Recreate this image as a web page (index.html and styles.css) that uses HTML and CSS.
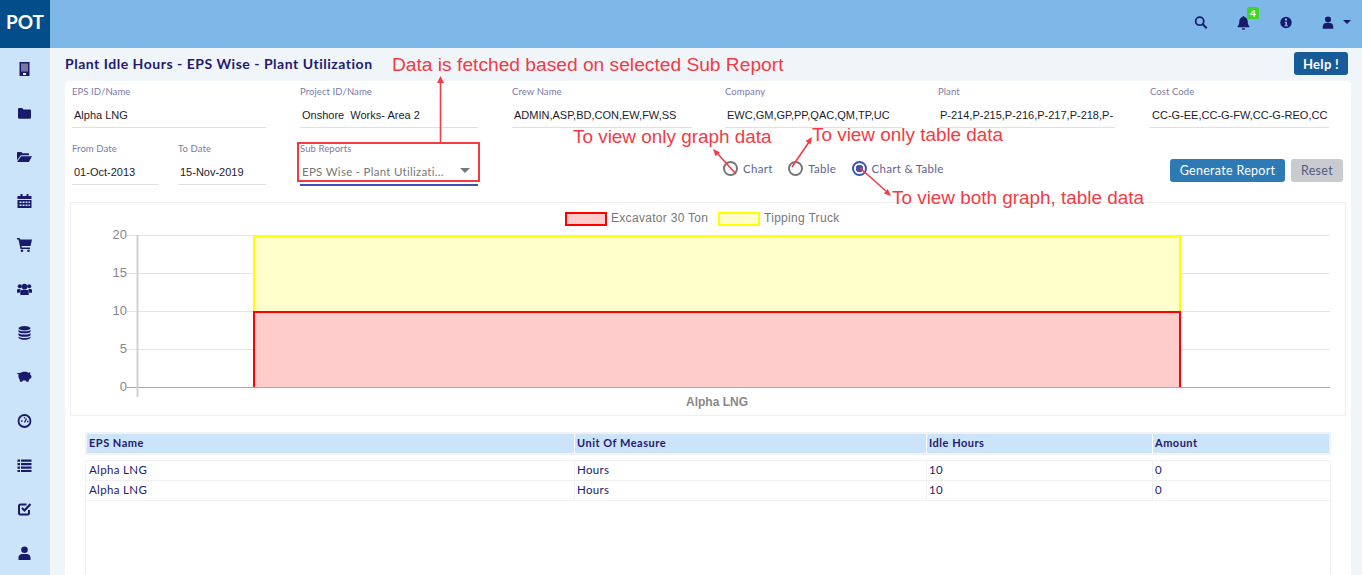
FILE: index.html
```html
<!DOCTYPE html>
<html>

<head>
    <meta charset="utf-8" />
    <title>Plant Idle Hours</title>
    <link rel="stylesheet" href="styles.css">
</head>

<body>
    <header class="topbar">
        <div class="logo">POT</div>
        <div class="top-icons">
            <svg class="top-ic" viewBox="0 0 16 16"><circle cx="6.500" cy="6.500" r="4.600" fill="none" stroke="#1a1a6c" stroke-width="2"/><path d="M10 10l4.500 4.500" stroke="#1a1a6c" stroke-width="2.400"/></svg>
            <span class="bell">
                <svg class="top-ic" viewBox="0 0 16 16"><path d="M8 1c.6 0 1 .4 1 1 2.400.5 3.500 2.500 3.500 5 0 3 .8 4 1.800 5v1H1.700v-1c1-1 1.800-2 1.800-5 0-2.500 1.100-4.500 3.500-5 0-.6.400-1 1-1zM6.300 14h3.400c0 1-.8 1.700-1.700 1.700S6.300 15 6.300 14z" fill="#1a1a6c"/></svg>
                <span class="badge">4</span>
            </span>
            <svg class="top-ic" viewBox="0 0 16 16"><circle cx="8" cy="8" r="6.500" fill="#1a1a6c"/><rect x="6.800" y="3.500" width="2.400" height="2.200" fill="#7db8e8"/><path d="M6.300 7h2.900v4h1v1.300H6.300V11h1V8.300h-1z" fill="#7db8e8"/></svg>
            <span class="user-menu">
                <svg class="top-ic" viewBox="0 0 16 16"><circle cx="8" cy="4.500" r="3.500" fill="#1a1a6c"/><path d="M2 15v-2.500C2 10 4 8.500 5.500 8.500h5c1.500 0 3.500 1.500 3.500 4V15z" fill="#1a1a6c"/></svg>
                <i class="caret"></i>
            </span>
        </div>
    </header>

    <div class="wrap">
        <nav class="sidebar">
            <svg viewBox="0 0 15 14"><path d="M2.500 0h10v14h-10z" fill="#1a1a6c"/><path d="M4 1.500h7v8H4z" fill="#77779f"/><path d="M6 11h3v2H6z" fill="#e8f2fb"/></svg>
            <svg viewBox="0 0 15 14"><path d="M1 3.200C1 2.500 1.500 2 2.200 2h3l1.300 1.500h6.300c.7 0 1.200.5 1.200 1.200v6.800c0 .7-.5 1.200-1.200 1.200H2.200c-.7 0-1.200-.5-1.200-1.200z" fill="#1a1a6c"/></svg>
            <svg viewBox="0 0 18 14"><path d="M0 2.500C0 1.700.6 1 1.400 1h3.800l1.400 1.500h6.500c.8 0 1.400.6 1.400 1.400V5H4.500L0 11zM4.900 6H18l-3.700 7H0z" fill="#1a1a6c"/></svg>
            <svg viewBox="0 0 14 14"><path d="M0 2h3V0h2v2h4V0h2v2h3v3H0z" fill="#1a1a6c"/><path d="M0 6h14v8H0z" fill="#1a1a6c"/><path d="M2 7.500h2v1.500H2zM5 7.500h2v1.500H5zM8 7.500h2v1.500H8zM11 7.500h1.500v1.500H11zM2 10.500h2V12H2zM5 10.500h2V12H5zM8 10.500h2V12H8zM11 10.500h1.500V12H11z" fill="#cbe4f9"/></svg>
            <svg viewBox="0 0 15 14"><path d="M0 0h2.600l.5 1.500H15l-1.500 6.500H4.500l.4 1.500H13V11H3.500L1.500 1.500H0z" fill="#1a1a6c"/><circle cx="5" cy="12.700" r="1.300" fill="#1a1a6c"/><circle cx="11.500" cy="12.700" r="1.300" fill="#1a1a6c"/></svg>
            <svg viewBox="0 0 16 14"><circle cx="3" cy="4" r="2.200" fill="#1a1a6c"/><circle cx="13" cy="4" r="2.200" fill="#1a1a6c"/><circle cx="8" cy="4.500" r="3" fill="#1a1a6c"/><path d="M0 11V8.500C0 7.500.8 7 1.500 7h2.300L3 11zM16 11V8.500c0-1-.8-1.500-1.500-1.500h-2.300l.8 4zM3.500 13.500v-4C3.500 8.500 4.500 8 5 8h6c.5 0 1.500.5 1.500 1.500v4z" fill="#1a1a6c"/></svg>
            <svg viewBox="0 0 13 14"><ellipse cx="6.500" cy="2.200" rx="6" ry="2.200" fill="#1a1a6c"/><path d="M.5 3.700c1.500 2 10.500 2 12 0v2c-1.500 2.200-10.500 2.200-12 0zM.5 7c1.500 2 10.500 2 12 0v2.200c-1.500 2.200-10.500 2.200-12 0zM.5 10.500c1.500 2 10.500 2 12 0v1.300c-1.500 2.700-10.500 2.700-12 0z" fill="#1a1a6c"/></svg>
            <svg viewBox="0 0 17 14"><path d="M3.500 2.500C5 1.500 7 1 9 1c2 0 3 .5 4 1.300L15 1.500v3l1.500 1.500-.5 2.500-2 .7-1 3.300h-2.500L10 11H6.500L6 12.500H3.500L2.800 9.500C1.500 8 1.200 5.500 2 4L0 3.500l.5-1z" fill="#1a1a6c"/></svg>
            <svg viewBox="0 0 14 14"><circle cx="7" cy="7" r="6" fill="none" stroke="#1a1a6c" stroke-width="1.800"/><path d="M7 8.500L9 4.500M3.500 7h1.500M9.500 7.500H11M7 3v1.500" stroke="#1a1a6c" stroke-width="1.300"/></svg>
            <svg viewBox="0 0 14 14"><path d="M0 1.500h2.500v2.300H0zM3.500 1.500H14v2.300H3.500zM0 5h2.500v2.300H0zM3.500 5H14v2.300H3.500zM0 8.500h2.500v2.300H0zM3.500 8.500H14v2.300H3.500zM0 12h2.500v2H0zM3.500 12H14v2H3.500z" fill="#1a1a6c"/></svg>
            <svg viewBox="0 0 14 14"><path d="M11.500 8v3c0 .8-.7 1.500-1.500 1.500H3c-.8 0-1.500-.7-1.500-1.500V4c0-.8.7-1.500 1.500-1.500h6" fill="none" stroke="#1a1a6c" stroke-width="2"/><path d="M4.500 6L7 8.500 13 2" fill="none" stroke="#1a1a6c" stroke-width="2.200"/></svg>
            <svg viewBox="0 0 14 14"><circle cx="7" cy="3.800" r="3.300" fill="#1a1a6c"/><path d="M1 14v-2.500C1 9.300 3 8 4.500 8h5c1.500 0 3.500 1.300 3.500 3.500V14z" fill="#1a1a6c"/></svg>
        </nav>

        <main class="content">
            <div class="title-row">
                <h1>Plant Idle Hours - EPS Wise - Plant Utilization</h1>
                <button class="btn-help">Help !</button>
            </div>

            <section class="card">
                <div class="filter-row">
                    <div class="field f1"><label>EPS ID/Name</label><div class="val">Alpha LNG</div></div>
                    <div class="field f2"><label>Project ID/Name</label><div class="val">Onshore&nbsp; Works- Area 2</div></div>
                    <div class="field f3"><label>Crew Name</label><div class="val">ADMIN,ASP,BD,CON,EW,FW,SS</div></div>
                    <div class="field f4"><label>Company</label><div class="val">EWC,GM,GP,PP,QAC,QM,TP,UC</div></div>
                    <div class="field f5"><label>Plant</label><div class="val">P-214,P-215,P-216,P-217,P-218,P-</div></div>
                    <div class="field f6"><label>Cost Code</label><div class="val">CC-G-EE,CC-G-FW,CC-G-REO,CC</div></div>
                </div>

                <div class="filter-row row2">
                    <div class="field d1"><label>From Date</label><div class="val">01-Oct-2013</div></div>
                    <div class="field d2"><label>To Date</label><div class="val">15-Nov-2019</div></div>
                    <div class="field sub"><label>Sub Reports</label>
                        <div class="select"><span>EPS Wise - Plant Utilizati...</span><i class="sel-caret"></i></div>
                    </div>
                    <div class="radios">
                        <span class="radio"><i class="dot"></i>Chart</span>
                        <span class="radio"><i class="dot"></i>Table</span>
                        <span class="radio"><i class="dot on"></i>Chart &amp; Table</span>
                    </div>
                    <div class="actions">
                        <button class="btn-gen">Generate Report</button>
                        <button class="btn-reset">Reset</button>
                    </div>
                </div>

                <div class="chart-box">
                    <svg class="chart" width="1274" height="212" viewBox="0 0 1274 212">
                        <rect x="495" y="10" width="40" height="12" fill="#ffcccc" stroke="#f00" stroke-width="2"/>
                        <text x="540" y="19" class="leg">Excavator 30 Ton</text>
                        <rect x="648" y="10" width="40" height="12" fill="#ffffcc" stroke="#ff0" stroke-width="2"/>
                        <text x="693" y="19" class="leg">Tipping Truck</text>
                        <path d="M56 32.500H1259M56 70.500H1259M56 108.500H1259M56 146.500H1259" stroke="#e4e4e4"/>
                        <rect x="183" y="33" width="926" height="76" fill="#ffffcc"/>
                        <path d="M183 109V33H1109V109" fill="none" stroke="#ff0" stroke-width="2"/>
                        <rect x="183" y="109" width="926" height="76" fill="#ffcccc"/>
                        <path d="M183 185V109H1109V185" fill="none" stroke="#f00" stroke-width="2"/>
                        <path d="M56 184.500H1259" stroke="#a8a8a8"/>
                        <path d="M66.500 32V194" stroke="#d0d0d0" stroke-width="2"/>
                        <text x="56" y="36" class="tick">20</text>
                        <text x="56" y="74" class="tick">15</text>
                        <text x="56" y="112" class="tick">10</text>
                        <text x="56" y="150" class="tick">5</text>
                        <text x="56" y="188" class="tick">0</text>
                        <text x="646" y="203" class="xlab">Alpha LNG</text>
                    </svg>
                </div>

                <div class="grid">
                    <div class="grid-head">
                        <span class="c1">EPS Name</span><span class="c2">Unit Of Measure</span><span class="c3">Idle Hours</span><span class="c4">Amount</span>
                    </div>
                    <div class="grid-body">
                        <div class="grid-row"><span class="c1">Alpha LNG</span><span class="c2">Hours</span><span class="c3">10</span><span class="c4">0</span></div>
                        <div class="grid-row"><span class="c1">Alpha LNG</span><span class="c2">Hours</span><span class="c3">10</span><span class="c4">0</span></div>
                    </div>
                </div>
            </section>
        </main>
    </div>

    <!-- annotations drawn over the page -->
    <svg class="arrows" width="1362" height="575" viewBox="0 0 1362 575">
        <rect x="298" y="143" width="181" height="38" fill="none" stroke="#f33b45" stroke-width="2"/>
        <g stroke="#f33b45" stroke-width="1.600" fill="none">
            <path d="M440.500 142V82"/>
            <path d="M736 174L717 153"/>
            <path d="M792 167L809 142"/>
            <path d="M860 168L886 191"/>
        </g>
        <g fill="#f33b45">
            <path d="M440.500 76l-3.500 7h7z"/>
            <path d="M713 149l6.900 3.200-4.400 4z"/>
            <path d="M812 137l-1.400 7.500-5-3.400z"/>
            <path d="M891 196l-7.200-2.500 4-4.400z"/>
        </g>
    </svg>
    <span class="note n1">Data is fetched based on selected Sub Report</span>
    <span class="note n2">To view only graph data</span>
    <span class="note n3">To view only table data</span>
    <span class="note n4">To view both graph, table data</span>
</body>

</html>
```

FILE: styles.css
```css
* {
    box-sizing: border-box;
}

html,
body {
    margin: 0;
    height: 575px;
    overflow: hidden;
}

body {
    position: relative;
    font-family: "Lato", sans-serif;
    background: #eff5f9;
    color: #1a1a6c;
}

/* top bar */
.topbar {
    display: flex;
    justify-content: space-between;
    height: 48px;
    background: #7db8e8;
}

.logo {
    width: 50px;
    background: #034e8a;
    color: #fff;
    font-size: 19px;
    font-weight: 700;
    line-height: 43px;
    text-align: center;
}

.top-icons {
    display: flex;
    align-items: center;
    gap: 28px;
    padding: 0 11px 4px 0;
}

.top-ic {
    display: block;
    width: 14px;
    height: 15px;
}

.bell {
    position: relative;
}

.bell .top-ic {
    width: 15px;
}

.badge {
    position: absolute;
    left: 11px;
    top: -8px;
    width: 12px;
    height: 12px;
    background: #3bd628;
    border-radius: 2px;
    color: #fff;
    font-size: 10px;
    font-weight: 700;
    line-height: 12px;
    text-align: center;
}

.user-menu {
    display: flex;
    align-items: center;
    gap: 8px;
}

.caret {
    width: 0;
    height: 0;
    border-left: 4px solid transparent;
    border-right: 4px solid transparent;
    border-top: 4px solid #1a1a6c;
}

/* sidebar */
.wrap {
    display: flex;
    height: 527px;
}

.sidebar {
    width: 50px;
    flex: none;
    background: #cbe4f9;
    display: flex;
    flex-direction: column;
    align-items: center;
    gap: 30px;
    padding: 14px 2px 0 0;
}

.sidebar svg {
    display: block;
    width: 15px;
    height: 14px;
}

/* main */
.content {
    flex: 1;
    padding: 0 11px 0 15px;
    min-width: 0;
}

.title-row {
    display: flex;
    justify-content: space-between;
    height: 33px;
    padding: 4px 3px 0 0;
}

h1 {
    margin: 3px 0 0;
    font-size: 14px;
    font-weight: 700;
    letter-spacing: .52px;
    color: #231a6e;
}

.btn-help {
    width: 54px;
    height: 23px;
    border: 0;
    border-radius: 3px;
    background: #175c98;
    color: #fff;
    font: 700 13px "Lato", sans-serif;
    letter-spacing: .3px;
}

.card {
    background: #fff;
    border-radius: 4px;
    padding: 0 5px;
    height: 500px;
}

.filter-row {
    display: flex;
    height: 57px;
    padding-top: 5px;
}

.row2 {
    height: 64px;
}

.field label {
    display: block;
    font-size: 9.500px;
    letter-spacing: .08px;
    color: #7a7aa8;
    line-height: 11px;
    height: 11px;
}

.val {
    font: 11px "Liberation Sans", sans-serif;
    color: #1b1b2e;
    line-height: 15px;
    height: 31px;
    padding: 11px 2px 0;
    border-bottom: 1px solid #e0e0e0;
    white-space: nowrap;
}

.f1 { width: 194px; margin-left: 2px; }
.f2 { width: 178px; margin-left: 34px; }
.f3 { width: 180px; margin-left: 34px; }
.f4 { width: 178px; margin-left: 33px; }
.f5 { width: 177px; margin-left: 35px; }
.f6 { width: 179px; margin-left: 35px; }

.d1 { width: 87px; margin-left: 2px; }
.d2 { width: 88px; margin-left: 19px; }

.sub {
    width: 178px;
    margin-left: 34px;
}

.select {
    display: flex;
    justify-content: space-between;
    align-items: center;
    height: 32px;
    padding: 4px 8px 0 2px;
    font-size: 11.500px;
    letter-spacing: .28px;
    color: #777;
    border-bottom: 2px solid #3f51b5;
}

.sel-caret {
    width: 0;
    height: 0;
    margin-bottom: 1px;
    border-left: 5px solid transparent;
    border-right: 5px solid transparent;
    border-top: 5px solid #777;
}

.radios {
    display: flex;
    gap: 15.500px;
    margin-left: 245px;
    height: 40px;
    padding-top: 17px;
}

.radio {
    display: flex;
    align-items: center;
    height: 16px;
    font-size: 11.500px;
    letter-spacing: .3px;
    color: #5f6390;
}

.dot {
    width: 15px;
    height: 15px;
    margin-right: 5px;
    border: 2px solid #757575;
    border-radius: 50%;
}

.dot.on {
    border-color: #3f51b5;
    background: radial-gradient(circle, #3f51b5 0 3.500px, #fff 4px);
}

.actions {
    display: flex;
    gap: 6px;
    margin: 16px 3px 0 auto;
    height: 23px;
}

.actions button {
    height: 23px;
    border: 0;
    border-radius: 3px;
    font: 12.500px "Lato", sans-serif;
    letter-spacing: .3px;
}

.btn-gen {
    width: 115px;
    background: #2d7ab5;
    color: #fff;
}

.btn-reset {
    width: 52px;
    background: #c8cbd0;
    color: #575a80;
}

/* chart */
.chart-box {
    height: 214px;
    border: 1px solid #f0f0f0;
}

.chart {
    display: block;
}

.leg {
    font: 12px "Liberation Sans", sans-serif;
    letter-spacing: .3px;
    fill: #777;
}

.tick {
    font: 13px "Liberation Sans", sans-serif;
    fill: #888;
    text-anchor: end;
}

.xlab {
    font: 700 12px "Liberation Sans", sans-serif;
    fill: #888;
    text-anchor: middle;
}

/* table */
.grid {
    width: 1246px;
    margin: 16px 0 0 15px;
}

.grid-head {
    display: flex;
    height: 23px;
    background: #cbe4f9;
    border: 2px solid #f2f2f2;
    font-size: 11px;
    font-weight: 700;
    letter-spacing: .5px;
    color: #231a6e;
    line-height: 18px;
}

.grid-body {
    margin-top: 5px;
    height: 130px;
    border: 1px solid #f2f2f2;
}

.grid-row {
    display: flex;
    height: 20px;
    border-bottom: 1px solid #f0f0f0;
    font-size: 11.500px;
    letter-spacing: .35px;
    line-height: 18px;
    color: #231a6e;
}

.c1 { width: 487px; padding-left: 2px; flex: none; }
.c2 { width: 352px; flex: none; }
.c3 { width: 226px; flex: none; }
.c4 { flex: 1; }

.grid-row .c1 { width: 488px; padding-left: 3px; }

.c2,
.c3,
.c4 {
    border-left: 1px solid #fff;
    padding-left: 2px;
}

.grid-row .c2,
.grid-row .c3,
.grid-row .c4 {
    border-left-color: #f0f0f0;
}

/* annotations */
.arrows {
    position: absolute;
    left: 0;
    top: 0;
    pointer-events: none;
}

.note {
    position: absolute;
    font: 18.900px "Liberation Sans", sans-serif;
    color: #f33b45;
    white-space: nowrap;
    line-height: 20px;
}

.n1 { left: 392px; top: 55px; font-size: 19.200px; }
.n2 { left: 573px; top: 127px; }
.n3 { left: 812px; top: 125px; }
.n4 { left: 892px; top: 188px; }
```
